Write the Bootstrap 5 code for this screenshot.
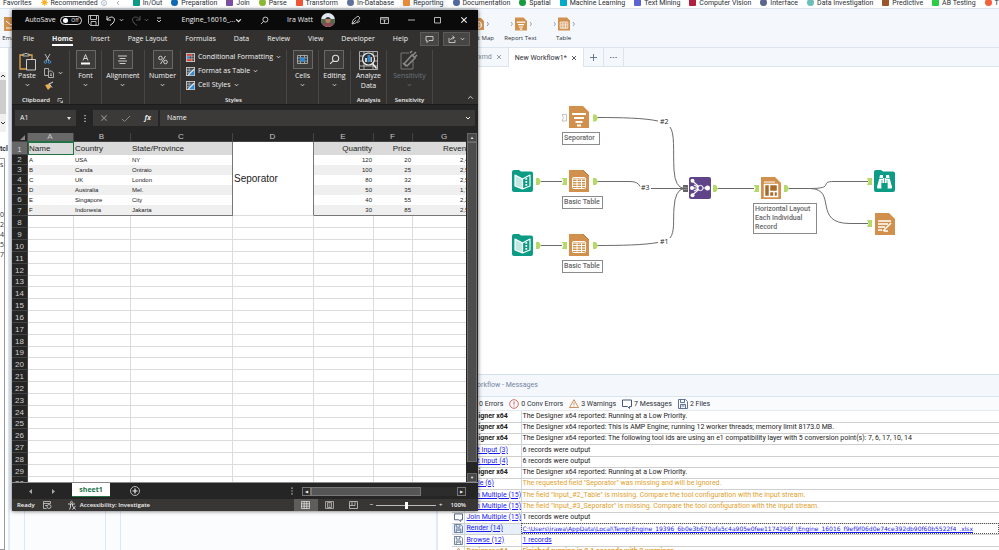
<!DOCTYPE html>
<html lang="en">
<head>
<meta charset="utf-8">
<meta name="viewport" content="width=device-width, initial-scale=1">
<title>Designer workflow with Excel output</title>
<link href="https://cdn.jsdelivr.net/npm/bootstrap@5.3.0/dist/css/bootstrap.min.css" rel="stylesheet">
<style>
  :root { --pale: #f4f8fd; --rule: #dce4ee; --ink: #2b2f36; --xl: #323130; --xl-dark: #252525; --xl-box: #3b3a39; }
  body { font: 7px/10px Roboto, "Open Sans", sans-serif; color: var(--ink); background: #fff; }
  button { border: 0; background: none; padding: 0; color: inherit; font: inherit; }
  svg { display: block; flex: none; overflow: visible; }
  .os { font-family: "Open Sans", "Noto Sans", sans-serif; }

  /* category strip */
  .cats { height: 9px; border-bottom: 1px solid var(--rule); }
  .cats-row { margin: -3px 0 0 3px; flex: 1; }
  .cat { display: flex; align-items: center; gap: 3px; color: var(--ink); text-decoration: none; white-space: nowrap; }
  .cat-active { background: var(--pale); box-shadow: 0 0 0 3px var(--pale); }
  .dot { width: 7px; height: 7px; border-radius: 1px; flex: none; }

  /* tool shelf */
  .shelf { height: 39px; background: var(--pale); border-bottom: 1px solid var(--rule); }
  .shelf-left { width: 438px; }
  .shelf-right { padding-left: 18px; }
  .tool { width: 43px; padding-top: 8px; font-size: 6px; line-height: 9px; white-space: nowrap; }
  .tool-edge { width: 20px; }
  .tool span { margin-top: 3px; }

  /* side panes */
  .pane-a { width: 10px; border-right: 2px solid #e1eafa; background: #fff; }
  .pane-b { width: 428px; background: #fafcfe; border-right: 2px solid #e1eafa; padding-left: 14px; }
  .pane-b div { border-left: 1px solid #dde7f8; }
  .pane-b .wide { width: 81px; }
  .pane-b .slim { width: 15px; }
  .mini-scroll { width: 6px; height: 60px; background: #f0f0f0; margin-top: 24px; }
  .mini-thumb { height: 34px; background: #cdcdcd; }
  .mini-box { width: 5px; border: 1px solid #9a9a9a; border-left: 0; margin-top: 4px; padding-top: 1px; }

  /* document tabs */
  .doctabs { height: 19px; background: var(--pale); border-bottom: 1px solid var(--rule); padding-left: 8px; }
  .doctab { display: flex; align-items: center; gap: 4px; padding: 0 6px; border-right: 1px solid var(--rule); color: #7d8797; }
  .doctab-on { background: #fff; color: var(--ink); margin-bottom: -1px; }

  /* canvas */
  .board { overflow: hidden; min-height: 0; background: #fff; }
  .wires, .node, .note { position: absolute; }
  .wires { left: 0; top: 0; }
  .note { border: 1px solid #8b8b8b; background: #fff; color: #666; font: 500 7px/9px Roboto, sans-serif; padding: 1px 0 1px 1px; }
  .sep-n { left: 131px; top: 39px; } .sep-l { left: 124px; top: 65px; width: 38px; }
  .bk1 { left: 74px; top: 103px; } .bk2 { left: 74px; top: 167px; }
  .tb1 { left: 131px; top: 103px; } .tb2 { left: 131px; top: 167px; }
  .tl1 { left: 124px; top: 129px; width: 41px; } .tl2 { left: 124px; top: 193px; width: 41px; }
  .joi { left: 251px; top: 110px; } .lay { left: 323px; top: 110px; }
  .lal { left: 315px; top: 136px; width: 64px; }
  .bro { left: 436px; top: 103px; } .ren { left: 437px; top: 146px; }

  /* messages */
  .msgs { height: 176px; overflow: hidden; border-top: 1px solid #d3deec; }
  .msgs-title { background: var(--pale); height: 22px; line-height: 21px; padding-left: 33px; color: #7484a0; border-bottom: 1px solid var(--rule); }
  .msgs-filter { background: #fafbfd; height: 14px; padding-left: 29px; gap: 6px; border-bottom: 1px solid #e7ebf1; }
  .msgs-filter button { display: flex; align-items: center; gap: 2px; }
  .log { margin-left: 14px; font-size: 7px; line-height: 9px; color: #222; width: calc(100% - 14px); table-layout: fixed; }
  .log td { padding: 0 2px; height: 11px; border-bottom: 1px solid #cfcfcf; border-right: 1px solid #c9d7e8; white-space: nowrap; overflow: hidden; }
  .log tr:nth-child(4n) td { height: 12px; }
  .log td + td + td { border-right: 0; padding-left: 1px; }
  .log a { color: #1a1af0; }
  .log .path { font: 6px/9px "DejaVu Sans", sans-serif; }
  .warn { color: #dfa12e; }
  .picked td:nth-child(-n+2) { background: #e8f1fb; }
  .picked td:last-child { outline: 1px dotted #555; outline-offset: -1px; }

  /* Excel window */
  .xl { position: absolute; left: 12px; top: 10px; bottom: 39px; width: 466px; background: var(--xl-dark); color: #f1f1f1; box-shadow: 0 0 4px rgba(0,0,0,.65); overflow: hidden; font-family: "Open Sans", "Noto Sans", sans-serif; }
  .xl-title { background: #0a0a0a; height: 20px; padding-left: 13px; }
  .toggle { width: 22px; height: 9px; border: 1px solid #ddd; border-radius: 5px; font-size: 5px; line-height: 7px; padding: 0 2px; }
  .toggle i { width: 5px; height: 5px; border-radius: 50%; background: #fff; }
  .qat { gap: 7px; margin-left: 6px; }
  .qat .pair { gap: 3px; }
  .winbtns { gap: 19px; margin-right: 10px; }
  .xl-tabs { background: var(--xl); height: 18px; padding: 0 8px 0 2px; }
  .xl-tab { padding: 0 9px; line-height: 14px; white-space: nowrap; }
  .xl-tab.on { font-weight: 700; }
  .xl-tab.on span { border-bottom: 2px solid #fff; padding-bottom: 1px; }
  .sq { background: #484644; border: 1px solid #5d5b59; height: 14px; }
  .ribbon { background: var(--xl); height: 57px; border-bottom: 1px solid #1b1b1b; }
  .grp { border-right: 1px solid #484644; margin: 2px 0 0; display: flex; flex-direction: column; align-items: center; justify-content: space-between; }
  .g-clip { width: 58px; } .g-32 { width: 32px; } .g-44 { width: 43px; } .g-36 { width: 36px; } .g-sty { width: 106px; } .g-sens { width: 46px; }
  .big { display: flex; flex-direction: column; align-items: center; }
  .big > svg:last-child { margin-top: 2px; }
  .big > span { white-space: nowrap; }
  .tile { width: 20px; height: 19px; border: 1px solid #6a6866; background: #3d3c3a; display: flex; align-items: center; justify-content: center; margin-bottom: 2px; }
  .cap { font-size: 6px; font-weight: 600; line-height: 8px; }
  .sty { display: flex; align-items: center; gap: 3px; height: 14px; white-space: nowrap; }
  .fbar { padding: 5px 3px 0; gap: 2px; height: 28px; }
  .fbox { background: var(--xl-box); height: 16px; color: #f1f1f1; font: inherit; border: 0; }
  .namebox { width: 61px; padding: 0 5px; }
  .namebox input, .fx-in input { background: none; border: 0; padding: 0; color: inherit; font: inherit; width: 100%; min-width: 0; }
  .fxbtns { width: 65px; }
  .fx-in { padding: 0 4px 0 7px; }
  .sheet { overflow: hidden; min-height: 0; padding-right: 12px; }
  .cells { overflow: hidden; }
  .grid-t { width: 465px; table-layout: fixed; border-collapse: separate; border-spacing: 0; background: #fff; color: #222; font: 6px/8px "Liberation Sans", Arial, sans-serif; }
  .grid-t th, .grid-t td { padding: 0 2px 0 1px; border-right: 1px solid #dcdcdc; border-bottom: 1px solid #dcdcdc; white-space: nowrap; overflow: hidden; height: 12px; }
  .grid-t thead th { background: var(--xl-dark); color: #c8c8c8; height: 9px; font: 8px/8px "Liberation Sans", sans-serif; text-align: center; border-color: #444; }
  .grid-t thead th.on { background: #686868; border-bottom: 1px solid #217346; }
  .grid-t tbody th { background: var(--xl-dark); color: #d0d0d0; font: 8px/8px "Liberation Sans", sans-serif; text-align: center; border-color: #444; padding: 0; vertical-align: bottom; }
  .grid-t tbody th.on { background: #686868; }
  .grid-t .data td, .grid-t .data th { height: 10px; }
  .grid-t .data td { border-bottom: 0; border-right: 0; }
  .grid-t .data tr:nth-child(odd) td { background: #efefef; }
  .grid-t .data tr:first-child > * { height: 13px; }
  .grid-t .data tr:first-child td { background: #dadada; font-size: 8px; }
  .grid-t .data tr:last-child td { border-bottom: 1px solid #777; height: 11px; }
  .grid-t .data td.edge { border-right: 1px solid #777; }
  .grid-t .data tr:first-child td.sepcell { background: #fff; font-size: 10px; vertical-align: middle; border-right: 1px solid #777; border-bottom: 1px solid #dcdcdc; }
  .grid-t .data tr:first-child td.cur { outline: 1px solid #217346; outline-offset: -1px; }
  .blank tr:nth-child(6n) > * { height: 11px; }
  .num { text-align: right; }
  .vbar { position: absolute; right: 1px; top: 0; bottom: 0; width: 10px; }
  .vbar button { background: #484848; height: 9px; border: 1px solid #666; font-size: 4px; line-height: 7px; }
  .vthumb { background: #4d4d4d; border: 1px solid #6d6d6d; flex: 0 1 320px; }
  .tabsbar { height: 17px; border-top: 1px solid #8a8a8a; }
  .arrows { width: 60px; padding: 0 17px; }
  .sheettab { background: #fff; color: #217346; font-weight: 700; border-bottom: 1px solid #217346; width: 38px; height: 14px; }
  .hbar { width: 164px; height: 9px; background: #2c2c2c; margin-right: 12px; }
  .hbar button { width: 9px; border: 1px solid #777; font-size: 4px; line-height: 7px; }
  .hthumb { width: 110px; background: #555; border: 1px solid #777; }
  .status { height: 12px; background: #383634; font-size: 6px; font-weight: 600; line-height: 10px; padding-left: 5px; }
  .view { width: 24px; height: 12px; display: flex; align-items: center; justify-content: center; }
  .view.on { background: #5f5d5b; }
  .zoom-in { appearance: none; width: 60px; height: 8px; background: linear-gradient(#bbb, #bbb) center / 100% 1px no-repeat; margin: 0 3px; }
  .zoom-in::-webkit-slider-thumb { appearance: none; width: 3px; height: 7px; background: #fff; }
</style>
<script src="https://cdn.jsdelivr.net/npm/bootstrap@5.3.0/dist/js/bootstrap.bundle.min.js"></script>
</head>
<body class="vh-100 overflow-hidden position-relative d-flex flex-column">

<svg width="0" height="0" class="position-absolute" aria-hidden="true">
  <defs>
    <symbol id="i-x" viewBox="0 0 6 6"><path d="M1 1l4 4M5 1l-4 4" stroke="currentColor" stroke-width=".8"/></symbol>
    <symbol id="i-chev" viewBox="0 0 6 4"><path d="M1 1l2 2 2-2" fill="none" stroke="currentColor"/></symbol>
    <symbol id="i-table" viewBox="0 0 20 22"><path d="M0 0h14l6 6v16H0z" fill="#d1904c"/><path d="M14 0l6 6" stroke="#b87b3a"/><rect x="3.500" y="7.500" width="13" height="11" rx="1" fill="none" stroke="#fff"/><path d="M3.500 9h13M3.500 11.500h13M3.500 14h13M3.500 16.500h13M8 9v9M12.500 9v9" stroke="#fff"/></symbol>
    <symbol id="i-text" viewBox="0 0 20 22"><path d="M0 0h14l6 6v16H0z" fill="#d1904c"/><path d="M3 8h14M5 12h10M6.500 16h7M8 19.500h4" stroke="#fff" stroke-width="2"/></symbol>
    <symbol id="i-layout" viewBox="0 0 20 22"><path d="M0 0h14l6 6v16H0z" fill="#d1904c"/><path d="M3 5h11" stroke="#fff"/><rect x="3.500" y="7.500" width="13" height="12" fill="#a96a2c" stroke="#fff" stroke-width="1.500"/><path d="M8.500 8v11M9 14.500h8M13 14.500v5" stroke="#fff" stroke-width="1.500"/></symbol>
    <symbol id="i-render" viewBox="0 0 20 22"><path d="M0 0h14l6 6v16H0z" fill="#d1904c"/><path d="M3 8h13M3 11h10M3 14h7M3 17h4M9 18h4" stroke="#fff" stroke-width="1.300"/><path d="M8 18l8-8" stroke="#fff" stroke-width="1.600"/></symbol>
    <symbol id="i-book" viewBox="0 0 21 22"><path d="M0 2q0-2 2-2h5l2 1.500h10q2 0 2 2V20q0 2-2 2H2q-2 0-2-2z" fill="#0c9c85"/><path d="M3 5l7.500 4v10L3 16zM18 5l-7.500 4v10L18 16z" fill="#0c9c85" stroke="#fff" stroke-width="1.200" stroke-linejoin="round"/><path d="M3 5l7.500 4v10L3 16z" fill="#fff" opacity=".75"/><path d="M14.300 8v9" stroke="#fff" stroke-width="1.800" stroke-dasharray="1.800 1.200"/></symbol>
    <symbol id="i-bino" viewBox="0 0 21 22"><path d="M0 2q0-2 2-2h5l2 1.500h10q2 0 2 2V20q0 2-2 2H2q-2 0-2-2z" fill="#0c9c85"/><path d="M6 5h3v3h3V5h3l.6 3L18 17q.2 1.500-1 1.500h-3.500V13h-6v5.500H4q-1.200 0-1-1.500L5.400 8z" fill="#fff"/><path d="M5 8.500h4M12 8.500h4M8 10v8M13 10v8M10.500 8v5" stroke="#0c9c85" stroke-width=".7"/></symbol>
    <symbol id="i-join" viewBox="0 0 22 22"><rect width="22" height="22" rx="2" fill="#5f4489"/><path d="M3.500 4l8 7-8 7M2 11h17M5 8l6 3-6 3" stroke="#fff" fill="none" stroke-width="1.100"/><circle cx="3.500" cy="3.800" r="2" fill="#fff"/><circle cx="3" cy="11" r="2" fill="#fff"/><circle cx="3.500" cy="18.200" r="2" fill="#fff"/><circle cx="11.500" cy="11" r="2.600" fill="#5f4489" stroke="#fff"/><circle cx="18.500" cy="11" r="2.500" fill="#fff"/></symbol>
    <symbol id="i-msg" viewBox="0 0 10 10"><path d="M.5 1h9v6.500H7.500v2l-2-2h-5z" fill="#fff" stroke="#45587a"/></symbol>
    <symbol id="i-file" viewBox="0 0 10 10"><path d="M.5.500h7l2 2v7h-9zM2.500.500v3h4v-3M2.500 9.500v-4h5v4M3.500 7h3" fill="none" stroke="#50658a" stroke-width=".9"/></symbol>
    <symbol id="i-warn" viewBox="0 0 10 9"><path d="M5 .7L9.500 8.500h-9zM5 3.500v2.500M5 6.700v.8" fill="none" stroke="#c4854a" stroke-width=".9"/></symbol>
    <symbol id="i-err" viewBox="0 0 10 10"><circle cx="5" cy="5" r="4.300" fill="none" stroke="#cf5a55" stroke-width=".9"/><path d="M5 2.500v3.200M5 6.700v.9" stroke="#cf5a55"/></symbol>
    <symbol id="i-glass" viewBox="0 0 10 10"><circle cx="6" cy="4" r="2.800" fill="none" stroke="#ddd"/><path d="M4 6L1 9" stroke="#ddd"/></symbol>
    <symbol id="i-sty" viewBox="0 0 10 10"><rect x=".5" y=".5" width="9" height="9" fill="#444" stroke="#ccc"/><path d="M.5 3.500h9M.5 6.500h9M3.500.500v9" stroke="#ccc" stroke-width=".7"/><path d="M4 4h5v5H4z" fill="#2a8ad8"/><path d="M2 9.500l7-7" stroke="#e8e8e8" stroke-width="1.200"/></symbol>
  </defs>
</svg>

<nav class="cats d-flex overflow-hidden flex-shrink-0" aria-label="Tool categories">
  <div class="cats-row d-flex justify-content-between">
    <a class="cat" href="#">Favorites</a>
    <a class="cat" href="#"><svg width="7" height="7" viewBox="0 0 7 7"><circle cx="3.500" cy="3.500" r="2.300" fill="#f6b21b"/><path d="M3.500 0v7M0 3.500h7M1 1l5 5M6 1L1 6" stroke="#f6b21b" stroke-width=".7"/></svg>Recommended <svg width="6" height="6" viewBox="0 0 6 6"><circle cx="3" cy="3" r="2.500" fill="none" stroke="#8fa0c0" stroke-width=".7"/><path d="M3 2v2.500" stroke="#8fa0c0" stroke-width=".7"/></svg></a>
    <a class="cat me-1" href="#" aria-label="Scroll left"><svg width="4" height="6" viewBox="0 0 4 6"><path d="M3 1L1 3l2 2" fill="none" stroke="#8fa0c0" stroke-width=".8"/></svg></a>
    <a class="cat" href="#"><i class="dot" style="background:#0c9c85"></i>In/Out</a>
    <a class="cat" href="#"><i class="dot rounded-circle" style="background:#0f69b4"></i>Preparation</a>
    <a class="cat" href="#"><i class="dot" style="background:#7a4ea3"></i>Join</a>
    <a class="cat" href="#"><i class="dot rounded-circle" style="background:#8ab833"></i>Parse</a>
    <a class="cat" href="#"><i class="dot" style="background:#ef5436"></i>Transform</a>
    <a class="cat" href="#"><i class="dot rounded-circle" style="background:#5e729c"></i>In-Database</a>
    <a class="cat cat-active" href="#"><i class="dot" style="background:#e58a35"></i>Reporting</a>
    <a class="cat" href="#"><i class="dot rounded-circle" style="background:#5067a0"></i>Documentation</a>
    <a class="cat" href="#"><i class="dot rounded-circle" style="background:#179b3d"></i>Spatial</a>
    <a class="cat" href="#"><i class="dot" style="background:#00aac8"></i>Machine Learning</a>
    <a class="cat" href="#"><i class="dot" style="background:#5c63d2"></i>Text Mining</a>
    <a class="cat" href="#"><i class="dot" style="background:#b01f41"></i>Computer Vision</a>
    <a class="cat" href="#"><i class="dot rounded-circle" style="background:#5b6690"></i>Interface</a>
    <a class="cat" href="#"><i class="dot rounded-circle" style="background:#6cbfb8"></i>Data Investigation</a>
    <a class="cat" href="#"><i class="dot" style="background:#9a552c"></i>Predictive</a>
    <a class="cat" href="#"><i class="dot" style="background:#2ecc47"></i>AB Testing</a>
    <a class="cat" href="#"><i class="dot rounded-circle" style="background:#f2603c"></i>T</a>
  </div>
</nav>

<div class="shelf d-flex overflow-hidden flex-shrink-0 os">
  <div class="shelf-left">
    <button class="tool tool-edge d-flex flex-column align-items-center"><svg width="17" height="14" viewBox="-2 0 17 14"><path d="M0 0h12l3 3v11H0z" fill="#d1904c"/><path d="M2 4l5 4 6-4M2 11h10" fill="none" stroke="#fff"/></svg><span>Email</span></button>
  </div>
  <div class="shelf-right d-flex">
    <button class="tool d-flex flex-column align-items-center"><svg width="20" height="14" viewBox="0 0 20 14"><path d="M4 1h9l3 3v9H4z" fill="#d1904c"/><circle cx="10" cy="8" r="3.500" fill="none" stroke="#fff"/><path d="M10 4v8M6 8h8" stroke="#fff" stroke-width=".7"/><path d="M19 5l1.500 2L19 9" fill="none" stroke="#7f92b8"/></svg><span>Report Map</span></button>
    <button class="tool d-flex flex-column align-items-center"><svg width="20" height="14" viewBox="0 0 20 14"><use href="#i-text" x="4" y="0" width="12" height="14"/><path d="M0 5l1.500 2L0 9M19 5l1.500 2L19 9" fill="none" stroke="#7f92b8" stroke-width=".8"/></svg><span>Report Text</span></button>
    <button class="tool d-flex flex-column align-items-center"><svg width="20" height="14" viewBox="0 0 20 14"><use href="#i-table" x="4" y="0" width="12" height="14"/><path d="M0 5l1.500 2L0 9M19 5l1.500 2L19 9" fill="none" stroke="#7f92b8" stroke-width=".8"/></svg><span>Table</span></button>
  </div>
</div>

<div class="d-flex flex-grow-1 overflow-hidden">
  <aside class="pane-a flex-shrink-0 d-flex flex-column overflow-hidden">
    <div class="mini-scroll d-flex flex-column align-items-center flex-shrink-0">
      <svg width="6" height="8" viewBox="0 0 6 8"><path d="M1 5l2-2 2 2" fill="none" stroke="#333"/></svg>
      <div class="mini-thumb w-100"></div>
      <svg width="6" height="16" viewBox="0 0 6 16"><path d="M1 8l2 2 2-2" fill="none" stroke="#333"/></svg>
    </div>
    <div class="mt-2 pt-1 fw-bold">tcl</div>
    <div class="mini-box flex-grow-1 os">s<br><br><br><br><br>0<br>2<br>4<br>5<br>7</div>
  </aside>
  <aside class="pane-b flex-shrink-0 d-flex"><div class="wide"></div><div class="slim"></div><div></div></aside>

  <main class="d-flex flex-column flex-grow-1 overflow-hidden">
    <div class="doctabs d-flex flex-shrink-0">
      <div class="doctab">Output.yxmd <button aria-label="Close tab"><svg width="6" height="6"><use href="#i-x"/></svg></button></div>
      <div class="doctab doctab-on">New Workflow1* <button aria-label="Close tab"><svg width="6" height="6"><use href="#i-x"/></svg></button></div>
      <button class="doctab" aria-label="New tab"><svg width="7" height="7" viewBox="0 0 7 7"><path d="M3.500 0v7M0 3.500h7" stroke="#6a7890"/></svg></button>
      <button class="doctab" aria-label="More"><svg width="7" height="3" viewBox="0 0 7 3"><path d="M0 1.500h7" stroke="#6a7890" stroke-dasharray="1.500 1.200"/></svg></button>
    </div>

    <section class="board position-relative flex-grow-1 os" aria-label="Workflow canvas">
      <svg class="wires" width="561" height="307" viewBox="438 67 561 307">
        <g fill="none" stroke="#6b6b6b">
          <path d="M597 117.500C622 117.500 644 118 658 121M670 127C675 134 673 150 674 170Q675 187.500 684 188.500M541 181.500h21M597 181.500h33q8 0 10 5M651 188.500h33M541 245.500h21M597 245.500C622 245.500 644 245 658 242.500M670 238C675 232 673 220 674 208Q675 189.500 684 188.500M718 188.500h36M788 188.500h22C836 188.500 818 181.500 834 181.500h34M788 188.500h22C838 189 812 223.500 850 223.500h18"/>
        </g>
        <g fill="#b5d96a">
          <path d="M593 114.500h3l2 3.500-2 3.500h-3zM536 178h3l2 3.500-2 3.500h-3zM536 242h3l2 3.500-2 3.500h-3zM593 178h3l2 3.500-2 3.500h-3zM593 242h3l2 3.500-2 3.500h-3zM713 185h3l2 3.500-2 3.500h-3zM784 185h3l2 3.500-2 3.500h-3z"/>
          <path d="M562 178h5v7h-5l1.500-3.500zM562 242h5v7h-5l1.500-3.500zM754 185h5v7h-5l1.500-3.500zM867 178h5v7h-5l1.500-3.500zM867 220h5v7h-5l1.500-3.500z"/>
        </g>
        <path d="M562 114.500h4.500v6.500H562l1.500-3.200z" fill="none" stroke="#aaa" stroke-width=".7"/>
        <path d="M683 185h5v7h-5z" fill="#666"/><path d="M683.500 187.500h4M683.500 189.500h4" stroke="#aaa" stroke-width=".6"/>
        <g fill="#222" font-size="7"><text x="660" y="124">#2</text><text x="641" y="190">#3</text><text x="660" y="244">#1</text></g>
      </svg>
      <svg class="node sep-n" width="20" height="22"><use href="#i-text"/></svg><div class="note sep-l">Seporator</div>
      <svg class="node bk1" width="21" height="22"><use href="#i-book"/></svg>
      <svg class="node tb1" width="20" height="22"><use href="#i-table"/></svg><div class="note tl1">Basic Table</div>
      <svg class="node bk2" width="21" height="22"><use href="#i-book"/></svg>
      <svg class="node tb2" width="20" height="22"><use href="#i-table"/></svg><div class="note tl2">Basic Table</div>
      <svg class="node joi" width="22" height="22"><use href="#i-join"/></svg>
      <svg class="node lay" width="20" height="22"><use href="#i-layout"/></svg><div class="note lal">Horizontal Layout Each Individual Record</div>
      <svg class="node bro" width="21" height="22"><use href="#i-bino"/></svg>
      <svg class="node ren" width="20" height="22"><use href="#i-render"/></svg>
    </section>

    <section class="msgs flex-shrink-0">
      <div class="msgs-title">Workflow - Messages</div>
      <div class="msgs-filter d-flex align-items-center">
        <button><svg width="10" height="10"><use href="#i-err"/></svg>0 Errors</button>
        <button><svg width="10" height="10"><use href="#i-err"/></svg>0 Conv Errors</button>
        <button><svg width="10" height="9"><use href="#i-warn"/></svg>3 Warnings</button>
        <button><svg width="10" height="10"><use href="#i-msg"/></svg>7 Messages</button>
        <button><svg width="10" height="10"><use href="#i-file"/></svg>2 Files</button>
      </div>
      <table class="log">
        <colgroup><col width="12"><col width="57"><col></colgroup>
        <tbody>
          <tr><td></td><td class="fw-bold">Designer x64</td><td>The Designer x64 reported: Running at a Low Priority.</td></tr>
          <tr><td></td><td class="fw-bold">Designer x64</td><td>The Designer x64 reported: This is AMP Engine; running 12 worker threads; memory limit 8173.0 MB.</td></tr>
          <tr><td></td><td class="fw-bold">Designer x64</td><td>The Designer x64 reported: The following tool ids are using an e1 compatibility layer with 5 conversion point(s): 7, 6, 17, 10, 14</td></tr>
          <tr><td></td><td><a href="#">Text Input (3)</a></td><td>6 records were output</td></tr>
          <tr><td></td><td><a href="#">Text Input (4)</a></td><td>6 records were output</td></tr>
          <tr><td></td><td class="fw-bold">Designer x64</td><td>The Designer x64 reported: Running at a Low Priority.</td></tr>
          <tr><td></td><td><a href="#">Table (6)</a></td><td class="warn">The requested field "Seporator" was missing and will be ignored.</td></tr>
          <tr><td></td><td><a href="#">Join Multiple (15)</a></td><td class="warn">The field "Input_#2_Table" is missing. Compare the tool configuration with the input stream.</td></tr>
          <tr><td></td><td><a href="#">Join Multiple (15)</a></td><td class="warn">The field "Input_#3_Seporator" is missing. Compare the tool configuration with the input stream.</td></tr>
          <tr><td><svg width="9" height="9"><use href="#i-msg"/></svg></td><td><a href="#">Join Multiple (15)</a></td><td>1 records were output</td></tr>
          <tr class="picked"><td><svg width="9" height="9"><use href="#i-file"/></svg></td><td><a href="#">Render (14)</a></td><td class="path"><a href="#">C:\Users\irawa\AppData\Local\Temp\Engine_19396_6b0e3b670afa5c4a905e0fee1174296f_\Engine_16016_f9ef9f06d0e74ce392db90f60b5522f4_.xlsx</a></td></tr>
          <tr><td><svg width="9" height="9"><use href="#i-file"/></svg></td><td><a href="#">Browse (12)</a></td><td><a href="#">1 records</a></td></tr>
          <tr class="warn fw-bold"><td><svg width="9" height="9"><use href="#i-warn"/></svg></td><td>Designer x64</td><td>Finished running in 2.1 seconds with 3 warnings</td></tr>
        </tbody>
      </table>
    </section>
  </main>
</div>

<section class="xl d-flex flex-column" aria-label="Excel">
  <header class="xl-title d-flex align-items-center flex-shrink-0">
    <span>AutoSave</span>
    <button class="toggle d-flex align-items-center justify-content-between ms-1" role="switch" aria-checked="false" aria-label="AutoSave"><i></i>Off</button>
    <div class="qat d-flex align-items-center">
      <button aria-label="Save"><svg width="11" height="11" viewBox="0 0 11 11"><path d="M.5.500h10v10h-8l-2-2zM2.500.500v4h6v-4M3 10.500v-4h5v4" fill="none" stroke="#ccc" stroke-width=".9"/></svg></button>
      <button aria-label="Undo" class="pair d-flex align-items-center"><svg width="10" height="11" viewBox="0 0 10 11"><path d="M1 1v4h4M1 5C3 1 9 1 8.500 5.500Q8 8 4 10.500" fill="none" stroke="#ddd"/></svg><svg width="5" height="4"><use href="#i-chev"/></svg></button>
      <button aria-label="Redo" class="pair d-flex align-items-center text-secondary"><svg width="10" height="11" viewBox="0 0 10 11"><path d="M9 1v4H5M9 5C7 1 1 1 1.500 5.500Q2 8 6 10.500" fill="none" stroke="#555"/></svg><svg width="5" height="4"><use href="#i-chev"/></svg></button>
      <button aria-label="Customize toolbar"><svg width="6" height="6" viewBox="0 0 6 6"><path d="M1 1h4M1 3l2 2 2-2" fill="none" stroke="#ddd" stroke-width=".9"/></svg></button>
    </div>
    <div class="d-flex align-items-center justify-content-between flex-grow-1 ps-3 pe-3">
      <button class="d-flex align-items-center ms-1">Engine_16016_... <svg width="7" height="5"><use href="#i-chev"/></svg></button>
      <button aria-label="Search"><svg width="9" height="9"><use href="#i-glass"/></svg></button>
      <button class="d-flex align-items-center gap-2">Ira Watt
        <svg width="14" height="14" viewBox="0 0 14 14"><clipPath id="av"><circle cx="7" cy="7" r="7"/></clipPath><g clip-path="url(#av)"><path d="M0 0h14v14H0z" fill="#dfe6ee"/><path d="M0 6h14v5H0z" fill="#56664d"/><path d="M1 14q0-4 5-4h3q4 0 4 4z" fill="#8e4b54"/><circle cx="7" cy="7.500" r="2.500" fill="#b98068"/><path d="M4 6q3-4 6 0z" fill="#333"/></g></svg></button>
    </div>
    <div class="winbtns d-flex align-items-center">
      <button aria-label="Draw"><svg width="10" height="10" viewBox="0 0 10 10"><path d="M1 9l1-4 5-4 2 2-4 5zM1 9l4-4M6 8l3-2" fill="none" stroke="#ddd" stroke-width=".8"/></svg></button>
      <button aria-label="Ribbon display"><svg width="9" height="7" viewBox="0 0 9 7"><path d="M.5.500h8v6h-8zM.5 2h8M4.500 6V3.200M3.300 4.300l1.200-1.200 1.200 1.200" fill="none" stroke="#ddd" stroke-width=".8"/></svg></button>
      <button aria-label="Minimize"><svg width="7" height="6" viewBox="0 0 7 6"><path d="M0 3h7" stroke="#ddd" stroke-width=".8"/></svg></button>
      <button aria-label="Maximize"><svg width="7" height="6" viewBox="0 0 7 6"><path d="M.5.500h6v5.500h-6z" fill="none" stroke="#ddd" stroke-width=".8"/></svg></button>
      <button aria-label="Close"><svg width="8" height="8"><use href="#i-x"/></svg></button>
    </div>
  </header>

  <nav class="xl-tabs d-flex align-items-center flex-shrink-0" aria-label="Ribbon tabs">
    <button class="xl-tab">File</button><button class="xl-tab on"><span>Home</span></button><button class="xl-tab">Insert</button><button class="xl-tab">Page Layout</button><button class="xl-tab">Formulas</button><button class="xl-tab">Data</button><button class="xl-tab">Review</button><button class="xl-tab">View</button><button class="xl-tab">Developer</button><button class="xl-tab">Help</button>
    <button class="sq ms-auto px-1" aria-label="Comments"><svg width="9" height="7" viewBox="0 0 9 7"><path d="M1 .5h7v4H4l-2 2v-2H1z" fill="none" stroke="#ddd" stroke-width=".8"/></svg></button>
    <button class="sq d-flex align-items-center gap-1 px-1 ms-1" aria-label="Share"><svg width="8" height="8" viewBox="0 0 8 8"><path d="M1 3v4.500h6V5M2.500 5Q3 2.500 6 2.500M4.500.800L6.500 2.500 4.500 4.200" fill="none" stroke="#ddd" stroke-width=".8"/></svg><svg width="5" height="4"><use href="#i-chev"/></svg></button>
  </nav>

  <div class="ribbon d-flex flex-shrink-0 position-relative">
    <div class="grp g-clip">
      <div class="d-flex gap-2 align-items-start">
        <button class="big"><svg width="17" height="21" viewBox="0 -2 17 21"><path d="M4 3H1v14h6M10 3h3v4" fill="none" stroke="#e2a548" stroke-width="1.300"/><path d="M4 4V2h2q1-2 2 0h2v2z" fill="none" stroke="#ddd" stroke-width=".8"/><path d="M7.500 7.500h9V18h-9z" fill="#323130" stroke="#ccc"/></svg><span>Paste</span><svg width="5" height="4"><use href="#i-chev"/></svg></button>
        <div class="d-flex flex-column gap-1 pt-1">
          <button aria-label="Cut"><svg width="7" height="10" viewBox="0 0 7 10"><path d="M1 0l4 7M6 0L2 7" stroke="#ddd" stroke-width=".8"/><circle cx="1.500" cy="8" r="1.300" fill="none" stroke="#4aa0e8" stroke-width=".8"/><circle cx="5.500" cy="8" r="1.300" fill="none" stroke="#4aa0e8" stroke-width=".8"/></svg></button>
          <button aria-label="Copy" class="d-flex align-items-center gap-1"><svg width="10" height="10" viewBox="0 0 10 10"><path d="M4 7.500H.5v-7h4v2M4.500 3h3l2 2v4.500h-5zM6 6h2M6 7.500h2" fill="none" stroke="#ccc" stroke-width=".8"/></svg><svg width="5" height="4"><use href="#i-chev"/></svg></button>
          <button aria-label="Format painter"><svg width="10" height="8" viewBox="0 1 10 8"><path d="M1 4l4-1 2 3-3 3z" fill="#e8b04e"/><path d="M5 3l4-2M5 2.500l3 4" stroke="#ddd"/></svg></button>
        </div>
      </div>
      <div class="cap d-flex align-items-center gap-2 ps-1">Clipboard <svg width="5" height="5" viewBox="0 0 5 5"><path d="M0 4V.500h4M1.500 2l3 3M4.500 2.500v2h-2" fill="none" stroke="#ddd" stroke-width=".7"/></svg></div>
    </div>
    <div class="grp g-32"><button class="big"><span class="tile"><svg width="11" height="11" viewBox="0 0 11 11"><path d="M3 6.500L5.500.500 8 6.500M4 4.500h3" fill="none" stroke="#ddd" stroke-width=".9"/><path d="M1 9.500h9" stroke="#fff" stroke-width="2"/></svg></span>Font<svg width="5" height="4"><use href="#i-chev"/></svg></button></div>
    <div class="grp g-44"><button class="big"><span class="tile"><svg width="9" height="9" viewBox="0 0 9 9"><path d="M0 1h9M1.500 3.500h6M0 6h9M1.500 8.500h6" stroke="#ddd" stroke-width=".9"/></svg></span>Alignment<svg width="5" height="4"><use href="#i-chev"/></svg></button></div>
    <div class="grp g-36"><button class="big"><span class="tile"><svg width="10" height="10" viewBox="0 0 10 10"><circle cx="2.500" cy="3" r="1.800" fill="none" stroke="#ddd" stroke-width=".9"/><circle cx="7.500" cy="7" r="1.800" fill="none" stroke="#ddd" stroke-width=".9"/><path d="M7.500 1l-5 8" stroke="#ddd" stroke-width=".9"/></svg></span>Number<svg width="5" height="4"><use href="#i-chev"/></svg></button></div>
    <div class="grp g-sty">
      <div>
        <button class="sty"><svg width="9" height="9" viewBox="0 0 10 10"><rect x=".5" y=".5" width="9" height="9" fill="#444" stroke="#ccc"/><path d="M1 1h5v2.500H1zM1 6.500h6V9H1z" fill="#e03c31"/><path d="M1 3.500h3v3H1z" fill="#3a8ee0"/><path d="M.5 3.500h9M.5 6.500h9M6.500.500v9" stroke="#ccc" stroke-width=".6"/></svg>Conditional Formatting <svg width="5" height="4"><use href="#i-chev"/></svg></button>
        <button class="sty"><svg width="9" height="9"><use href="#i-sty"/></svg>Format as Table <svg width="5" height="4"><use href="#i-chev"/></svg></button>
        <button class="sty"><svg width="9" height="9"><use href="#i-sty"/></svg>Cell Styles <svg width="5" height="4"><use href="#i-chev"/></svg></button>
      </div>
      <div class="cap">Styles</div>
    </div>
    <div class="grp g-32"><button class="big"><span class="tile"><svg width="11" height="11" viewBox="0 0 11 11"><path d="M.5 1.500h10v8H.500zM.5 4h10M.5 7h10M3.500 1.500v8M7.500 1.500v8" fill="none" stroke="#ccc" stroke-width=".7"/><path d="M3 3.500h5v4H3z" fill="#2a8ad8"/></svg></span>Cells<svg width="5" height="4"><use href="#i-chev"/></svg></button></div>
    <div class="grp g-32"><button class="big"><span class="tile"><svg width="11" height="11"><use href="#i-glass"/></svg></span>Editing<svg width="5" height="4"><use href="#i-chev"/></svg></button></div>
    <div class="grp g-36"><button class="big"><svg width="19" height="21" viewBox="0 -1 19 21"><path d="M.5.500h18v18H.500zM.5 5h18M.5 10h18M.5 15h18M5 .5v18M14 .5v18" fill="none" stroke="#bbb" stroke-width=".9"/><circle cx="9.500" cy="8" r="6" fill="#323130" stroke="#eee" stroke-width="1.200"/><path d="M13.500 12.500l4 5" stroke="#eee" stroke-width="1.500"/><path d="M6 7h2v4H6z" fill="#ccc"/><path d="M8.500 4h2.500v7H8.500z" fill="#2a8ad8"/><path d="M11.500 6H13v5h-1.500z" fill="#ccc"/></svg><span>Analyze<br>Data</span></button><div class="cap">Analysis</div></div>
    <div class="grp g-sens"><button class="big text-secondary" disabled><svg width="18" height="21" viewBox="0 -1 18 21"><path d="M9 2H1v16h12V10" fill="none" stroke="#777"/><path d="M4 13l8-9 3 3-8 8zM10 2l2-2M13 4l3-3M15 6l2-2M3 12l3 3" fill="none" stroke="#888" stroke-width="1.600"/></svg><span>Sensitivity</span><svg width="5" height="4"><use href="#i-chev"/></svg></button><div class="cap">Sensitivity</div></div>
    <button class="ms-auto align-self-end me-1 mb-1" aria-label="Collapse ribbon"><svg width="7" height="5" viewBox="0 0 6 4"><path d="M1 3l2-2 2 2" fill="none" stroke="#ddd" stroke-width=".8"/></svg></button>
  </div>

  <div class="fbar d-flex flex-shrink-0">
    <div class="fbox namebox d-flex align-items-center"><input aria-label="Name box" value="A1"><svg width="4" height="3" viewBox="0 0 4 3"><path d="M0 0h4L2 3z" fill="#ddd"/></svg></div>
    <svg width="13" height="16" viewBox="0 0 13 16"><path d="M7 5v7" stroke="#ddd" stroke-width="1.200" stroke-dasharray="1.200 1.700"/></svg>
    <div class="fbox fxbtns d-flex align-items-center justify-content-around">
      <svg width="8" height="8" viewBox="0 0 6 6" color="#888"><path d="M1 1l4 4M5 1L1 5" stroke="#888" stroke-width=".8"/></svg>
      <svg width="8" height="7" viewBox="0 0 8 7"><path d="M0 4l2.500 2.500L8 1" fill="none" stroke="#888"/></svg>
      <em class="fw-bold">fx</em>
    </div>
    <div class="fbox fx-in d-flex align-items-center flex-grow-1"><input aria-label="Formula bar" value="Name"><svg width="6" height="4"><use href="#i-chev"/></svg></div>
  </div>

  <div class="sheet position-relative flex-grow-1">
    <div class="cells h-100">
      <table class="grid-t">
        <colgroup><col width="16"><col width="46"><col width="57"><col width="102"><col width="81"><col width="60"><col width="39"><col width="64"></colgroup>
        <thead><tr><th class="text-end"><svg width="5" height="5" viewBox="0 0 5 5" class="ms-auto"><path d="M5 0v5H0z" fill="#888"/></svg></th><th class="on">A</th><th>B</th><th>C</th><th>D</th><th>E</th><th>F</th><th>G</th></tr></thead>
        <tbody class="data">
          <tr><th class="on">1</th><td class="cur">Name</td><td>Country</td><td class="edge">State/Province</td><td class="sepcell" rowspan="7">Seporator</td><td class="num">Quantity</td><td class="num">Price</td><td class="num">Revenue</td></tr>
          <tr><th>2</th><td>A</td><td>USA</td><td class="edge">NY</td><td class="num">120</td><td class="num">20</td><td class="num">2,400</td></tr>
          <tr><th>3</th><td>B</td><td>Canda</td><td class="edge">Ontraio</td><td class="num">100</td><td class="num">25</td><td class="num">2,500</td></tr>
          <tr><th>4</th><td>C</td><td>UK</td><td class="edge">London</td><td class="num">80</td><td class="num">32</td><td class="num">2,560</td></tr>
          <tr><th>5</th><td>D</td><td>Australia</td><td class="edge">Mel.</td><td class="num">50</td><td class="num">35</td><td class="num">1,750</td></tr>
          <tr><th>6</th><td>E</td><td>Singapore</td><td class="edge">City</td><td class="num">40</td><td class="num">55</td><td class="num">2,200</td></tr>
          <tr><th>7</th><td>F</td><td>Indonesia</td><td class="edge">Jakarta</td><td class="num">30</td><td class="num">85</td><td class="num">2,550</td></tr>
        </tbody>
        <tbody class="blank" id="blank"></tbody>
      </table>
    </div>
    <div class="vbar d-flex flex-column"><button aria-label="Scroll up">▲</button><div class="vthumb"></div><button class="mt-auto" aria-label="Scroll down">▼</button></div>
  </div>

  <div class="tabsbar d-flex flex-shrink-0 align-items-center">
    <div class="arrows d-flex justify-content-between"><svg width="3" height="5" viewBox="0 0 3 5"><path d="M3 0v5L0 2.500z" fill="#aaa"/></svg><svg width="3" height="5" viewBox="0 0 3 5"><path d="M0 0v5l3-2.500z" fill="#aaa"/></svg></div>
    <button class="sheettab align-self-start">sheet1</button>
    <button class="ms-3 ps-1" aria-label="New sheet"><svg width="10" height="10" viewBox="0 0 10 10"><circle cx="5" cy="5" r="4.500" fill="none" stroke="#ddd" stroke-width=".8"/><path d="M5 2.500v5M2.500 5h5" stroke="#eee" stroke-width="1.200"/></svg></button>
    <svg width="14" height="8" viewBox="0 0 14 8" class="ms-auto"><path d="M4 .5v7" stroke="#ddd" stroke-width="1.200" stroke-dasharray="1.200 1.700"/></svg>
    <div class="hbar d-flex"><button aria-label="Scroll left">◀</button><div class="hthumb"></div><button class="ms-auto" aria-label="Scroll right">▶</button></div>
  </div>

  <footer class="status d-flex align-items-center flex-shrink-0">
    <span>Ready</span>
    <svg width="9" height="8" viewBox="0 0 9 8" class="ms-2 me-3"><path d="M.5.500h7v2M.5.500v7h3M.5 2.500h7M2 4.500h2" fill="none" stroke="#ccc" stroke-width=".8"/><circle cx="6" cy="5.500" r="2" fill="none" stroke="#ccc" stroke-width=".8"/></svg>
    <svg width="8" height="9" viewBox="0 0 8 9" class="me-1"><circle cx="3.500" cy="1.300" r="1" fill="none" stroke="#ddd" stroke-width=".7"/><path d="M0 3h7M2.500 3v3L1.500 8.500M4.500 3v2M4.500 5l3 3.500M7.500 5l-3 3.500" fill="none" stroke="#ddd" stroke-width=".9"/></svg>
    <span>Accessibility: Investigate</span>
    <div class="ms-auto d-flex">
      <button class="view on" aria-label="Normal view"><svg width="9" height="8" viewBox="0 0 9 8"><path d="M.5.500h8v7h-8zM.5 2.800h8M.5 5.200h8M3.200.500v7M5.800.500v7" fill="none" stroke="#eee" stroke-width=".7"/></svg></button>
      <button class="view" aria-label="Page layout view"><svg width="9" height="8" viewBox="0 0 9 8"><path d="M.5.500h8v7h-8zM2.500 1.500h4v5h-4zM3.500 3h2M3.500 5h2" fill="none" stroke="#ccc" stroke-width=".7"/></svg></button>
      <button class="view" aria-label="Page break view"><svg width="9" height="8" viewBox="0 0 9 8"><path d="M.5.500h8v7h-8zM3 .5v4h3v-4M.5 4.500H3" fill="none" stroke="#ccc" stroke-width=".8"/></svg></button>
    </div>
    <button aria-label="Zoom out" class="ms-1">−</button><input class="zoom-in" type="range" min="0" max="200" value="100" aria-label="Zoom"><button aria-label="Zoom in">+</button>
    <span class="ms-2 me-2 pe-1">100%</span>
  </footer>
</section>

<script>
  const blank = document.getElementById('blank');
  for (let r = 8; r <= 30; r++) {
    const tr = blank.insertRow();
    tr.innerHTML = '<th>' + r + '</th>' + '<td></td>'.repeat(7);
  }
</script>
</body>
</html>
